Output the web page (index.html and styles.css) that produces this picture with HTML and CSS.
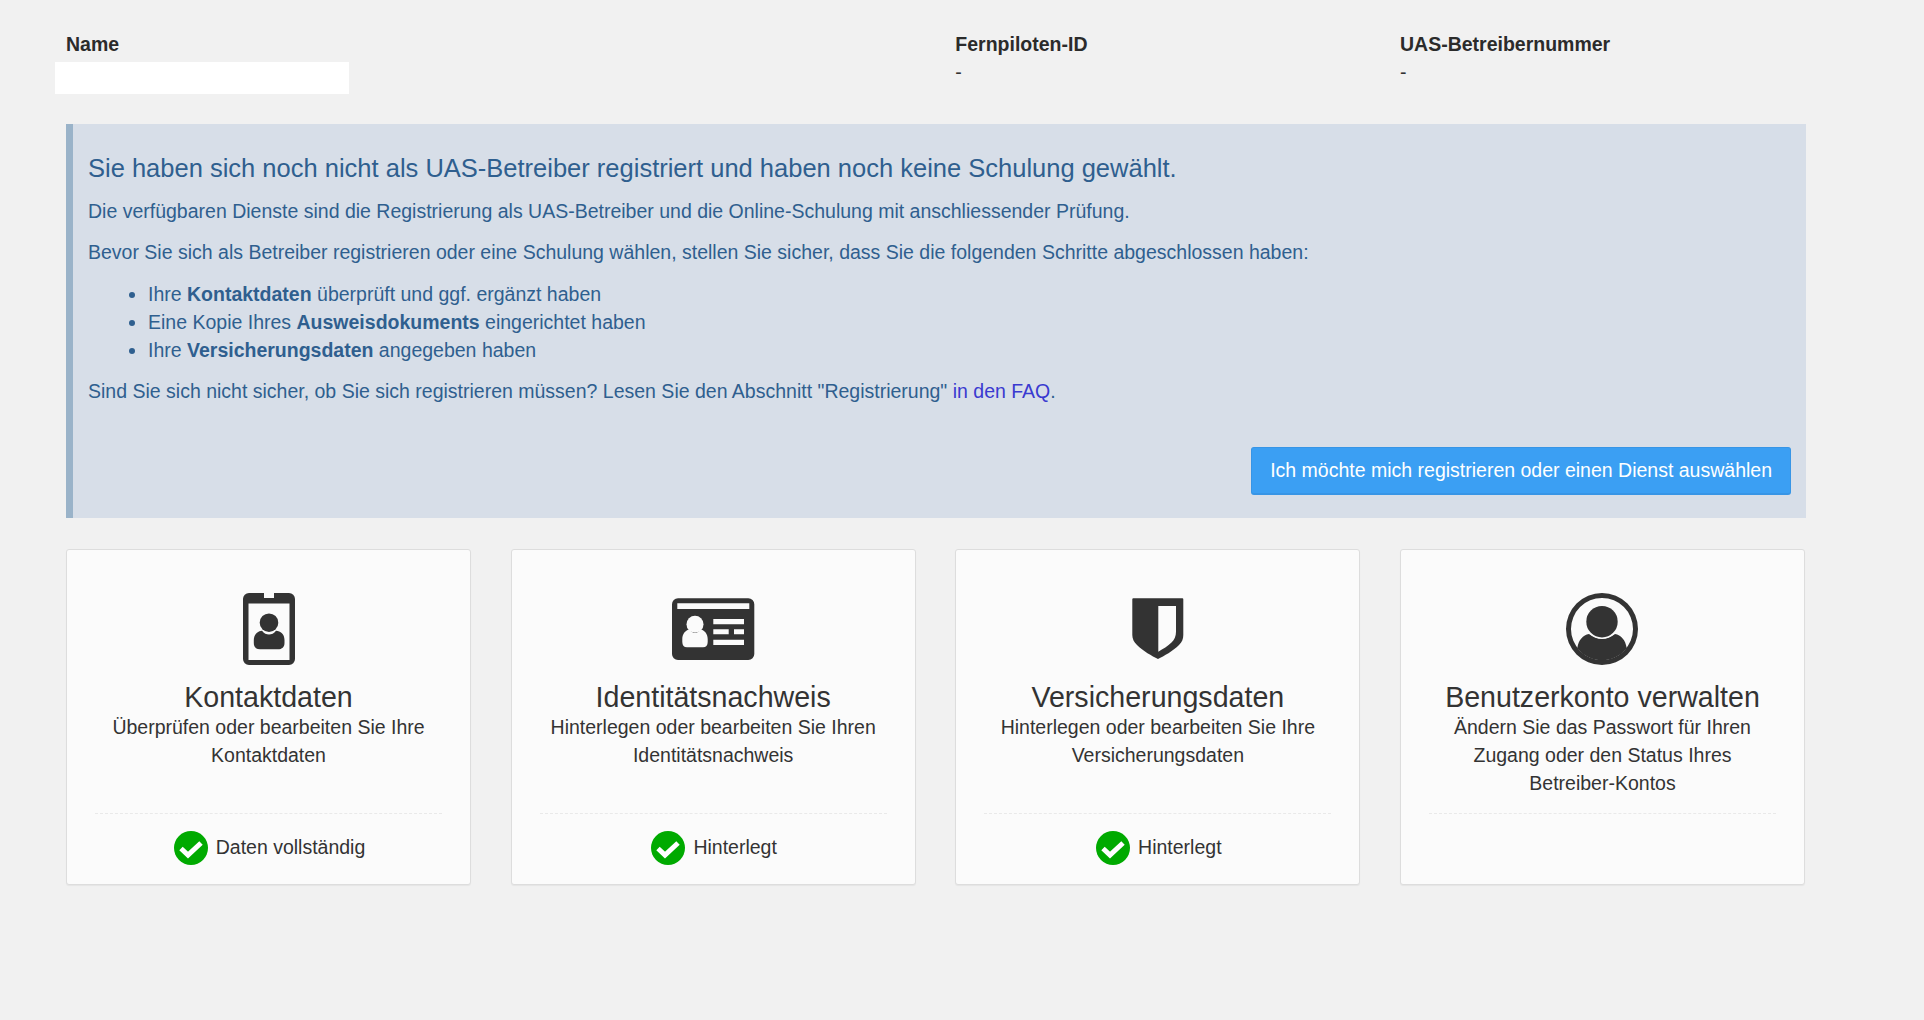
FILE: index.html
```html
<!DOCTYPE html>
<html lang="de">
<head>
<meta charset="utf-8">
<title>Dashboard</title>
<link rel="stylesheet" href="styles.css">
</head>
<body>
<main class="page">
  <section class="info">
    <div class="info-col info-name">
      <div class="label">Name</div>
      <div class="redacted"></div>
    </div>
    <div class="info-col">
      <div class="label">Fernpiloten-ID</div>
      <div class="value">-</div>
    </div>
    <div class="info-col">
      <div class="label">UAS-Betreibernummer</div>
      <div class="value">-</div>
    </div>
  </section>

  <section class="notice">
    <h2 class="notice-title">Sie haben sich noch nicht als UAS-Betreiber registriert und haben noch keine Schulung gewählt.</h2>
    <p class="notice-text">Die verfügbaren Dienste sind die Registrierung als UAS-Betreiber und die Online-Schulung mit anschliessender Prüfung.</p>
    <p class="notice-text notice-lead">Bevor Sie sich als Betreiber registrieren oder eine Schulung wählen, stellen Sie sicher, dass Sie die folgenden Schritte abgeschlossen haben:</p>
    <ul class="notice-list">
      <li>Ihre <strong>Kontaktdaten</strong> überprüft und ggf. ergänzt haben</li>
      <li>Eine Kopie Ihres <strong>Ausweisdokuments</strong> eingerichtet haben</li>
      <li>Ihre <strong>Versicherungsdaten</strong> angegeben haben</li>
    </ul>
    <p class="notice-text">Sind Sie sich nicht sicher, ob Sie sich registrieren müssen? Lesen Sie den Abschnitt "Registrierung" <a class="notice-link" href="#">in den FAQ</a>.</p>
    <div class="notice-actions">
      <a class="btn" href="#">Ich möchte mich registrieren oder einen Dienst auswählen</a>
    </div>
  </section>

  <section class="cards">
    <article class="card">
      <svg class="card-icon" viewBox="0 0 90 72" aria-hidden="true">
        <path class="ink" d="M25 0H40V5H50V0H65a6 6 0 0 1 6 6V66a6 6 0 0 1-6 6H25a6 6 0 0 1-6-6V6a6 6 0 0 1 6-6ZM24.500 10.500V67H65.500V10.500Z" fill-rule="evenodd"/>
        <path class="ink" d="M29.800 50V47C29.800 41 34 38 38 37.700C40 40.500 42.500 41.500 45 41.500C47.500 41.500 50 40.500 52 37.700C56.500 38 60.500 41 60.500 47V50C60.500 54 58 56.300 54 56.300H36C32 56.300 29.800 54 29.800 50Z"/>
        <circle class="ink" cx="45" cy="29.700" r="9.300"/>
      </svg>
      <h3 class="card-title">Kontaktdaten</h3>
      <p class="card-desc">Überprüfen oder bearbeiten Sie Ihre Kontaktdaten</p>
      <div class="card-rule"></div>
      <div class="status">
        <svg class="status-icon" viewBox="0 0 34 34" aria-hidden="true"><circle class="ok-disc" cx="17" cy="17" r="17"/><path class="ok-tick" d="M7 17.500L14 24L27 12"/></svg>
        <span class="status-text">Daten vollständig</span>
      </div>
    </article>

    <article class="card">
      <svg class="card-icon" viewBox="0 0 90 72" aria-hidden="true">
        <path class="ink" fill-rule="evenodd" d="M10 5.300H80.300a6 6 0 0 1 6 6V61a6 6 0 0 1-6 6H10a6 6 0 0 1-6-6V11.300a6 6 0 0 1 6-6ZM9.300 10.300V16H81.300V10.300ZM45.300 26V31.300H76V26ZM45.300 36.300V41.300H60.700V36.300ZM66 36.300V41.300H76V36.300ZM45.300 46.700V52H76V46.700Z"/>
        <circle class="paper" cx="27" cy="31.300" r="8.500"/>
        <path class="paper" d="M14.300 49V46C14.300 41 17.500 37 21.500 36.500C23 38.800 25 40 27 40C29 40 31 38.800 32.500 36.500C36.500 37 39.700 41 39.700 46V49C39.700 52.500 38 54.300 35 54.300H19C16 54.300 14.300 52.500 14.300 49Z"/>
      </svg>
      <h3 class="card-title">Identitätsnachweis</h3>
      <p class="card-desc">Hinterlegen oder bearbeiten Sie Ihren Identitätsnachweis</p>
      <div class="card-rule"></div>
      <div class="status">
        <svg class="status-icon" viewBox="0 0 34 34" aria-hidden="true"><circle class="ok-disc" cx="17" cy="17" r="17"/><path class="ok-tick" d="M7 17.500L14 24L27 12"/></svg>
        <span class="status-text">Hinterlegt</span>
      </div>
    </article>

    <article class="card">
      <svg class="card-icon" viewBox="0 0 90 72" aria-hidden="true">
        <path class="ink" fill-rule="evenodd" d="M20.300 5.300H69.300a1 1 0 0 1 1 1V42C70.300 46 69 49 66 52C60 58 51 63 45 66C39 63 30 58 24 52C21 49 19.300 46 19.300 42V6.300a1 1 0 0 1 1-1ZM45.300 13V58.700C50 56 55 53 58.500 49.500C61.500 46.500 63 43 63 38.700V13Z"/>
      </svg>
      <h3 class="card-title">Versicherungsdaten</h3>
      <p class="card-desc">Hinterlegen oder bearbeiten Sie Ihre Versicherungsdaten</p>
      <div class="card-rule"></div>
      <div class="status">
        <svg class="status-icon" viewBox="0 0 34 34" aria-hidden="true"><circle class="ok-disc" cx="17" cy="17" r="17"/><path class="ok-tick" d="M7 17.500L14 24L27 12"/></svg>
        <span class="status-text">Hinterlegt</span>
      </div>
    </article>

    <article class="card">
      <svg class="card-icon" viewBox="0 0 90 72" aria-hidden="true">
        <path class="ink" fill-rule="evenodd" d="M45 0a36 36 0 1 0 0 72a36 36 0 1 0 0-72ZM45 5a31 31 0 1 1 0 62a31 31 0 1 1 0-62Z"/>
        <path class="ink" d="M20.300 55C21.500 47 26 42 32 41C35 43.500 40 45.500 45 45.500C50 45.500 55 43.500 58 41C64 42 68.500 47 69.700 55A31 31 0 0 1 20.300 55Z"/>
        <circle class="paper" cx="45" cy="28.700" r="17.300"/>
        <circle class="ink" cx="45" cy="28.700" r="15.700"/>
      </svg>
      <h3 class="card-title">Benutzerkonto verwalten</h3>
      <p class="card-desc">Ändern Sie das Passwort für Ihren Zugang oder den Status Ihres <span class="nowrap">Betreiber-Kontos</span></p>
      <div class="card-rule"></div>
      <div class="status"></div>
    </article>
  </section>
</main>
</body>
</html>
```
FILE: styles.css
```css
* {
  box-sizing: border-box;
}

html,
body {
  margin: 0;
  height: 100%;
}

body {
  background: #f1f1f1;
  color: #333;
  font-family: "Liberation Sans", Arial, sans-serif;
  font-size: 19.5px;
  line-height: 28px;
  overflow: hidden;
}

.page {
  padding: 30px 118px 0 66px;
}

.info {
  display: grid;
  grid-template-columns: repeat(4, 1fr);
  column-gap: 39.67px;
  height: 94px;
  margin-right: 1px;
}

.info-name {
  grid-column: span 2;
}

.label {
  font-weight: 700;
  color: #2b2b2b;
}

.value {
  color: #333;
}

.redacted {
  width: 294px;
  height: 32px;
  margin: 4px 0 0 -11px;
  background: #fff;
}

.notice {
  height: 394px;
  padding: 25px 15px 0 15px;
  background: #d7dee8;
  border-left: 7px solid #9ab3c9;
  color: #2f5f8f;
}

.notice-title {
  margin: 0 0 10px;
  font-size: 25.5px;
  font-weight: 400;
  line-height: 38px;
}

.notice-text {
  margin: 0 0 13px;
}

.notice-lead {
  margin-bottom: 14px;
}

.notice-list {
  margin: 0 0 13px;
  padding-left: 60px;
}

.notice-link {
  color: #3a3ad0;
  text-decoration: none;
}

.notice-actions {
  display: flex;
  justify-content: flex-end;
  margin-top: 42px;
}

.btn {
  display: block;
  height: 48px;
  padding: 0 18px;
  background: #3b9ff3;
  border: 1px solid #3795e6;
  border-bottom-width: 2px;
  border-radius: 3px;
  color: #fff;
  line-height: 45px;
  text-decoration: none;
}

.cards {
  display: grid;
  grid-template-columns: repeat(4, 1fr);
  column-gap: 39.67px;
  margin: 31px 1px 0 0;
}

.card {
  height: 336px;
  padding: 43px 28px 0;
  background: #fbfbfb;
  border: 1px solid #ddd;
  border-radius: 3px;
  box-shadow: 0 1px 1px rgba(0, 0, 0, 0.05);
  text-align: center;
}

.card-icon {
  display: block;
  width: 90px;
  height: 72px;
  margin: 0 auto;
}

.ink {
  fill: #333;
}

.paper {
  fill: #fbfbfb;
}

.card-title {
  margin: 16px -20px -1px;
  font-size: 28.6px;
  font-weight: 400;
  line-height: 33px;
}

.card-desc {
  height: 84px;
  margin: 0;
}

.nowrap {
  white-space: nowrap;
}

.card-rule {
  margin-top: 16px;
  border-top: 1px dashed #e9e9e9;
}

.status {
  display: flex;
  align-items: center;
  justify-content: center;
  gap: 8px;
  height: 34px;
  margin-top: 17px;
  padding-left: 2px;
}

.status-text {
  margin-bottom: 2px;
}

.status-icon {
  width: 34px;
  height: 34px;
}

.ok-disc {
  fill: #00aa00;
}

.ok-tick {
  fill: none;
  stroke: #fff;
  stroke-width: 5;
}
```
